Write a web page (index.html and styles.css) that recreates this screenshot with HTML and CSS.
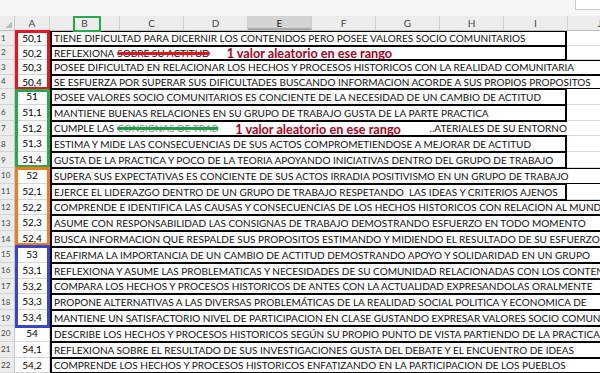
FILE: index.html
```html
<!DOCTYPE html>
<html>
	<head>
		<meta charset="UTF-8">
		<title>Hoja1</title>
		<link rel="stylesheet" href="styles.css">
	</head>
	<body>
		<div class="sheet">
			<div class="topbar"><div class="fx"></div></div>
			<div class="head">
				<div class="corner"></div>
				<div class="ch ca-w">A</div>
				<div class="ch cb-w">B</div>
				<div class="ch">C</div>
				<div class="ch">D</div>
				<div class="ch sel">E</div>
				<div class="ch">F</div>
				<div class="ch">G</div>
				<div class="ch">H</div>
				<div class="ch">I</div>
				<div class="ch">J</div>
			</div>

			<div class="row sm"><div class="rh">1</div><div class="ca">50,1</div><div class="tx short">TIENE DIFICULTAD PARA DICERNIR LOS CONTENIDOS PERO POSEE VALORES SOCIO COMUNITARIOS</div></div>
			<div class="row sm"><div class="rh">2</div><div class="ca">50,2</div><div class="tx short">REFLEXIONA <span class="cut-red">SOBRE SU ACTITUD</span><span class="note">1 valor aleatorio en ese rango</span></div></div>
			<div class="row sm"><div class="rh">3</div><div class="ca">50,3</div><div class="tx">POSEE DIFICULTAD EN RELACIONAR LOS HECHOS Y PROCESOS HISTORICOS CON LA REALIDAD COMUNITARIA</div></div>
			<div class="row sm"><div class="rh">4</div><div class="ca">50,4</div><div class="tx">SE ESFUERZA POR SUPERAR SUS DIFICULTADES BUSCANDO INFORMACION ACORDE A SUS PROPIOS PROPOSITOS</div></div>
			<div class="row"><div class="rh">5</div><div class="ca">51</div><div class="tx short">POSEE VALORES SOCIO COMUNITARIOS ES CONCIENTE DE LA NECESIDAD DE UN CAMBIO DE ACTITUD</div></div>
			<div class="row"><div class="rh">6</div><div class="ca">51,1</div><div class="tx short">MANTIENE BUENAS RELACIONES EN SU GRUPO DE TRABAJO GUSTA DE LA PARTE PRACTICA</div></div>
			<div class="row"><div class="rh">7</div><div class="ca">51,2</div><div class="tx short open">CUMPLE LAS <span class="cut-green">CONSIGNAS DE TRAB</span><span class="note n2">1 valor aleatorio en ese rango</span><span class="tail">..ATERIALES DE SU ENTORNO</span></div></div>
			<div class="row"><div class="rh">8</div><div class="ca">51,3</div><div class="tx short">ESTIMA Y MIDE LAS CONSECUENCIAS DE SUS ACTOS COMPROMETIENDOSE A MEJORAR DE ACTITUD</div></div>
			<div class="row"><div class="rh">9</div><div class="ca">51,4</div><div class="tx short">GUSTA DE LA PRACTICA Y POCO DE LA TEORIA APOYANDO INICIATIVAS DENTRO DEL GRUPO DE TRABAJO</div></div>
			<div class="row"><div class="rh">10</div><div class="ca">52</div><div class="tx">SUPERA SUS EXPECTATIVAS ES CONCIENTE DE SUS ACTOS IRRADIA POSITIVISMO EN UN GRUPO DE TRABAJO</div></div>
			<div class="row"><div class="rh">11</div><div class="ca">52,1</div><div class="tx short">EJERCE EL LIDERAZGO DENTRO DE UN GRUPO DE TRABAJO RESPETANDO&nbsp; LAS IDEAS Y CRITERIOS AJENOS</div></div>
			<div class="row"><div class="rh">12</div><div class="ca">52,2</div><div class="tx">COMPRENDE E IDENTIFICA LAS CAUSAS Y CONSECUENCIAS DE LOS HECHOS HISTORICOS CON RELACION AL MUNDO</div></div>
			<div class="row"><div class="rh">13</div><div class="ca">52,3</div><div class="tx">ASUME CON RESPONSABILIDAD LAS CONSIGNAS DE TRABAJO DEMOSTRANDO ESFUERZO EN TODO MOMENTO</div></div>
			<div class="row"><div class="rh">14</div><div class="ca">52,4</div><div class="tx">BUSCA INFORMACION QUE RESPALDE SUS PROPOSITOS ESTIMANDO Y MIDIENDO EL RESULTADO DE SU ESFUERZO</div></div>
			<div class="row"><div class="rh">15</div><div class="ca">53</div><div class="tx">REAFIRMA LA IMPORTANCIA DE UN CAMBIO DE ACTITUD DEMOSTRANDO APOYO Y SOLIDARIDAD EN UN GRUPO</div></div>
			<div class="row"><div class="rh">16</div><div class="ca">53,1</div><div class="tx">REFLEXIONA Y ASUME LAS PROBLEMATICAS Y NECESIDADES DE SU COMUNIDAD RELACIONADAS CON LOS CONTENIDOS</div></div>
			<div class="row"><div class="rh">17</div><div class="ca">53,2</div><div class="tx">COMPARA LOS HECHOS Y PROCESOS HISTORICOS DE ANTES CON LA ACTUALIDAD EXPRESANDOLAS ORALMENTE</div></div>
			<div class="row"><div class="rh">18</div><div class="ca">53,3</div><div class="tx">PROPONE ALTERNATIVAS A LAS DIVERSAS PROBLEMÁTICAS DE LA REALIDAD SOCIAL POLITICA Y ECONOMICA DE</div></div>
			<div class="row"><div class="rh">19</div><div class="ca">53,4</div><div class="tx">MANTIENE UN SATISFACTORIO NIVEL DE PARTICIPACION EN CLASE GUSTANDO EXPRESAR VALORES SOCIO COMUNITARIOS</div></div>
			<div class="row"><div class="rh">20</div><div class="ca">54</div><div class="tx">DESCRIBE LOS HECHOS Y PROCESOS HISTORICOS SEGÚN SU PROPIO PUNTO DE VISTA PARTIENDO DE LA PRACTICA</div></div>
			<div class="row"><div class="rh">21</div><div class="ca">54,1</div><div class="tx">REFLEXIONA SOBRE EL RESULTADO DE SUS INVESTIGACIONES GUSTA DEL DEBATE Y EL ENCUENTRO DE IDEAS</div></div>
			<div class="row"><div class="rh">22</div><div class="ca">54,2</div><div class="tx">COMPRENDE LOS HECHOS Y PROCESOS HISTORICOS ENFATIZANDO EN LA PARTICIPACION DE LOS PUEBLOS</div></div>

			<!-- marcas a mano sobre la hoja -->
			<div class="mark m-red"></div>
			<div class="mark m-green"></div>
			<div class="mark m-orange"></div>
			<div class="mark m-blue"></div>
			<div class="mark m-head"></div>
		</div>
	</body>
</html>
```

FILE: styles.css
```css
*{
	margin: 0;
	padding: 0;
	box-sizing: border-box;
}
body{
	width: 600px;
	height: 373px;
	overflow: hidden;
	background: #fff;
	font-family: Lato, "Liberation Sans", sans-serif;
}
.sheet{
	position: relative;
	width: 600px;
	height: 373px;
	overflow: hidden;
}
.topbar{
	height: 16px;
	background: #f6f6f6;
	display: flex;
	justify-content: flex-end;
}
.fx{
	width: 25px;
	height: 10px;
	background: #fff;
	border-left: 1px solid #c8c8c8;
	border-bottom: 1px solid #c8c8c8;
}
.head{
	display: flex;
	height: 15px;
	background: #ececec;
	border-bottom: 1px solid #bdbdbd;
}
.corner{
	width: 15px;
	flex: none;
	border-right: 1px solid #c6c6c6;
	background: linear-gradient(135deg, transparent 62%, #b9b9b9 62%) no-repeat right 2px bottom 2px/8px 8px;
}
.ch{
	width: 64px;
	flex: none;
	text-align: center;
	font-size: 10px;
	line-height: 15px;
	color: #444;
	border-right: 1px solid #d0d0d0;
}
.ch.ca-w{ width: 35px; }
.ch.cb-w{ width: 70px; }
.ch.sel{
	background: #d3d3d3;
	color: #222;
	border-bottom: 2px solid #a6a6a6;
}
.row{
	display: flex;
	height: 15.8px;
	background:
		linear-gradient(#d6d6d6, #d6d6d6) left bottom/100% 1px no-repeat,
		linear-gradient(#d6d6d6, #d6d6d6) 566px 0/1px 100% no-repeat;
}
.row.sm{
	height: 14.5px;
}
.rh{
	width: 15px;
	flex: none;
	background: #ececec;
	border-right: 1px solid #c6c6c6;
	border-bottom: 1px solid #d4d4d4;
	font-size: 8px;
	color: #444;
	display: flex;
	align-items: center;
	padding-left: 1px;
}
.ca{
	width: 35px;
	flex: none;
	text-align: center;
	font-size: 10px;
	line-height: 15px;
	border-right: 1px solid #d6d6d6;
}
.tx{
	flex: none;
	width: 600px;
	background: #fff;
	border: 1px solid #000;
	border-left-width: 2px;
	border-right: none;
	font-size: 10px;
	white-space: nowrap;
	overflow: hidden;
	display: flex;
	align-items: center;
	padding-left: 2px;
	color: #111;
}
.tx.short{
	width: 517px;
	border-right: 2px solid #000;
}
.tx.open{
	border-right: none;
}
.cut-red{
	margin-left: 3px;
	text-decoration: line-through #e3151c 2.5px;
}
.cut-green{
	margin-left: 3px;
	color: #8a8a8a;
	text-decoration: line-through #1f9f45 2.5px;
}
.note{
	margin-left: 17px;
	color: #b0001a;
	font-weight: bold;
	font-size: 12.7px;
}
.note.n2{
	margin-left: 17px;
}
.tail{
	margin-left: auto;
}
.mark{
	position: absolute;
	left: 15px;
	width: 35px;
	border: 3px solid;
}
.m-red{ top: 30px; height: 60px; border-color: #e5161d; }
.m-green{ top: 89px; height: 79px; border-color: #22ad4c; }
.m-orange{ top: 167px; height: 79px; border-color: #f57a1e; }
.m-blue{ top: 245px; height: 83px; border-color: #3a46c9; }
.m-head{
	top: 16px;
	left: 73px;
	width: 28px;
	height: 16px;
	border: 2px solid #22ad4c;
}
```
